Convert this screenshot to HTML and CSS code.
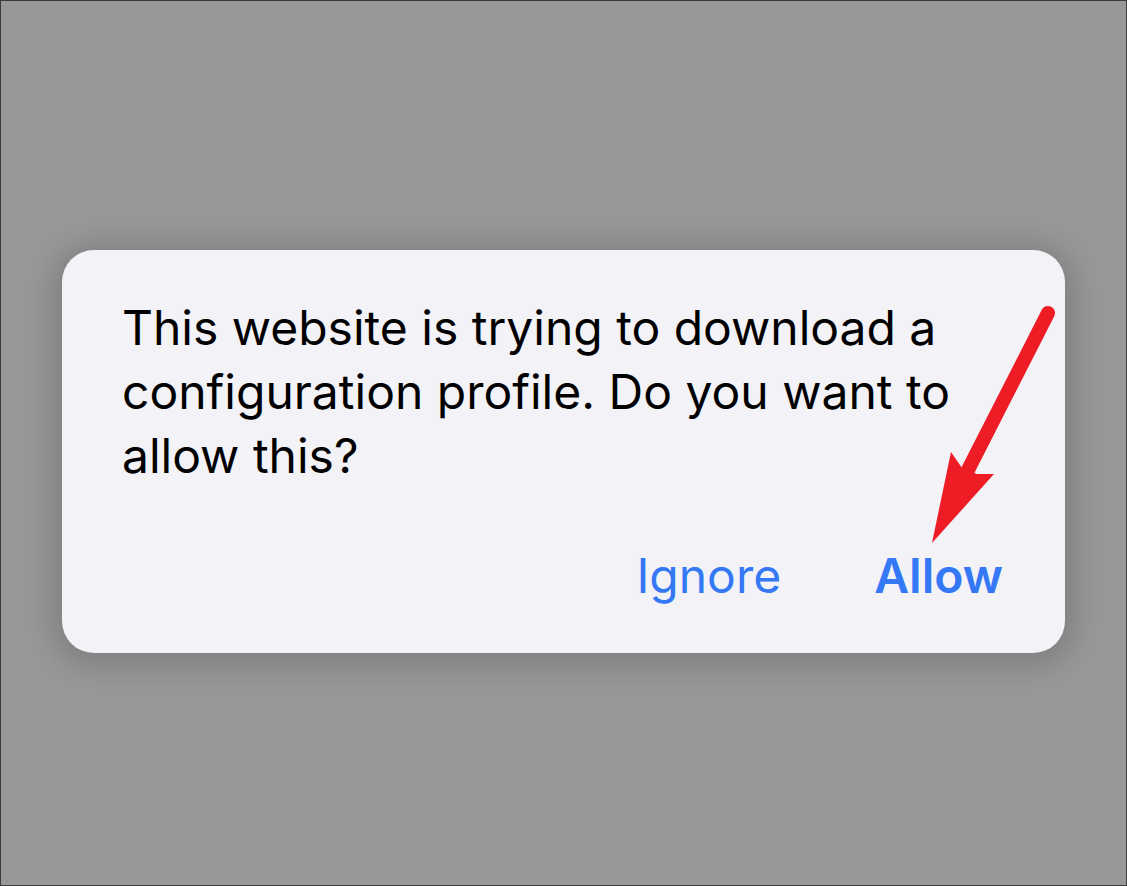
FILE: index.html
```html
<!DOCTYPE html>
<html>
<head>
<meta charset="utf-8">
<link rel="stylesheet" href="styles.css">
</head>
<body>
<div class="screen">
  <div class="alert">
    <p class="message">This website is trying to download a configuration profile. Do you want to allow this?</p>
    <div class="actions">
      <span class="btn">Ignore</span>
      <span class="btn primary">Allow</span>
    </div>
  </div>
  <svg class="arrow" width="1127" height="886" viewBox="0 0 1127 886">
    <line x1="1048" y1="313" x2="968" y2="470" stroke="#ee1c25" stroke-width="14" stroke-linecap="round"/>
    <polygon points="951,452 962,468 977,474 994,474 932,543" fill="#ee1c25"/>
  </svg>
</div>
</body>
</html>
```
FILE: styles.css
```css
html, body {
  margin: 0;
  padding: 0;
}
body {
  width: 1127px;
  height: 886px;
  overflow: hidden;
}
.screen {
  position: relative;
  box-sizing: border-box;
  width: 1127px;
  height: 886px;
  border: 1px solid #3c3c3c;
  background: #989898;
  padding: 249px 0 0 61px;
  font-family: Inter, "Noto Sans", sans-serif;
}
.alert {
  box-sizing: border-box;
  width: 1003px;
  height: 403px;
  background: #f2f2f7;
  border-radius: 32px;
  box-shadow: 0 4px 30px 10px rgba(0, 0, 0, 0.16);
  padding: 46px 60px 0 60px;
  display: flex;
  flex-direction: column;
}
.message {
  margin: 0;
  font-size: 48px;
  line-height: 64px;
  color: #000;
  width: 880px;
}
.actions {
  display: flex;
  justify-content: flex-end;
  gap: 93px;
  margin-top: 56px;
  padding-right: 2px;
}
.btn {
  font-size: 48px;
  line-height: 64px;
  color: #3478f6;
}
.btn.primary {
  font-weight: 600;
}
.arrow {
  position: absolute;
  left: -1px;
  top: -1px;
  pointer-events: none;
}
```
